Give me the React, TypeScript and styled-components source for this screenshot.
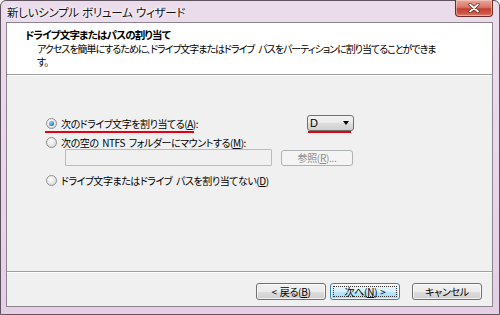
import React from "react";
import styled, { createGlobalStyle } from "styled-components";

const GlobalStyle = createGlobalStyle`
  html, body { margin: 0; padding: 0; width: 500px; height: 315px; overflow: hidden; background: #ffffff; }
  * { box-sizing: border-box; }
  #root { width: 500px; height: 315px; }
`;

const Window = styled.div`
  width: 500px;
  height: 315px;
  display: flex;
  flex-direction: column;
  background: linear-gradient(to bottom, #ebdcec 0%, #e8d6e8 60%, #e4cfe4 100%);
  border: 1px solid #5e5260;
  border-radius: 6px 6px 0 0;
  padding: 0 6px 7px 5px;
  font-family: "Noto Sans CJK JP", "Noto Sans", sans-serif;
  font-feature-settings: "palt";
  color: #000;
`;

const TitleBar = styled.div`
  height: 21px;
  display: flex;
  align-items: flex-start;
  justify-content: space-between;
`;

const TitleText = styled.span`
  font-size: 11.5px;
  line-height: 20px;
  letter-spacing: -0.3px;
  word-spacing: 1px;
  padding-left: 1px;
  padding-top: 1px;
  color: #111;
  text-shadow: 0 0 6px #fff, 0 0 3px #fff;
`;

const CloseButton = styled.div`
  width: 38px;
  height: 17px;
  margin-top: -1px;
  border: 1px solid #6e2a24;
  border-top: none;
  border-radius: 0 0 4px 4px;
  background: linear-gradient(to bottom, #e9a79b 0%, #d8776a 45%, #c2402f 55%, #d0584a 85%, #e08676 100%);
  box-shadow: inset 0 0 0 1px rgba(255, 220, 210, 0.5);
  display: flex;
  align-items: center;
  justify-content: center;
`;

const Client = styled.div`
  flex: 1;
  display: flex;
  flex-direction: column;
  border: 1px solid #8c8590;
  background: #f0f0f0;
`;

const Header = styled.div`
  height: 52px;
  background: #ffffff;
  padding: 5px 0 0 18px;
  border-bottom: 1px solid #a0a0a0;
  box-shadow: 0 1px 0 #ffffff;
`;

const HeaderTitle = styled.div`
  font-size: 10.5px;
  font-weight: 700;
  line-height: 14px;
  letter-spacing: -0.8px;
`;

const HeaderSub = styled.div`
  font-size: 10px;
  line-height: 13px;
  letter-spacing: -1px;
  word-spacing: 3px;
  padding-left: 12px;
  white-space: nowrap;
`;

const Body = styled.div`
  flex: 1;
  padding: 40px 0 0 39px;
  display: flex;
  flex-direction: column;
  border-bottom: 1px solid #a0a0a0;
`;

const Row = styled.div<{ $top?: number }>`
  display: flex;
  align-items: center;
  margin-top: ${(p) => p.$top ?? 0}px;
`;

const RadioLabel = styled.label<{ $width?: number; $marked?: boolean }>`
  position: relative;
  display: flex;
  align-items: center;
  gap: 4px;
  font-size: 10px;
  line-height: 13px;
  letter-spacing: -0.45px;
  word-spacing: 2px;
  white-space: nowrap;
  width: ${(p) => (p.$width ? `${p.$width}px` : "auto")};
  ${(p) =>
    p.$marked &&
    `&::after {
      content: "";
      position: absolute;
      left: -1px;
      top: 14px;
      width: 149px;
      height: 2px;
      background: #e60012;
    }`}
`;

const RadioCircle = styled.span<{ $checked?: boolean }>`
  width: 11px;
  height: 11px;
  border-radius: 50%;
  border: 1px solid #8e8f8f;
  background: radial-gradient(circle at 40% 35%, #ffffff 0%, #e6e6e6 55%, #cfcfcf 100%);
  display: flex;
  align-items: center;
  justify-content: center;
  flex: none;
  &::after {
    content: "";
    display: ${(p) => (p.$checked ? "block" : "none")};
    width: 5px;
    height: 5px;
    border-radius: 50%;
    background: radial-gradient(circle at 35% 35%, #9fd3f5 0%, #2f86c9 60%, #1c5a93 100%);
  }
`;

const Underlined = styled.span`
  text-decoration: underline;
`;

const Combo = styled.div`
  position: relative;
  width: 47px;
  height: 16px;
  border: 1px solid #707070;
  border-radius: 3px;
  background: linear-gradient(to bottom, #f2f2f2 0%, #ebebeb 50%, #dddddd 51%, #cfcfcf 100%);
  display: flex;
  align-items: center;
  justify-content: space-between;
  padding: 0 4px 0 2px;
  &::after {
    content: "";
    position: absolute;
    left: 0px;
    bottom: -3px;
    width: 43px;
    height: 2px;
    background: #e60012;
  }
`;

const ComboText = styled.span`
  font-family: "Liberation Sans", sans-serif;
  font-size: 11px;
  line-height: 12px;
`;

const Arrow = styled.span`
  width: 0;
  height: 0;
  border-left: 3.5px solid transparent;
  border-right: 3.5px solid transparent;
  border-top: 4px solid #000;
`;

const FieldRow = styled.div`
  display: flex;
  align-items: center;
  padding-left: 19px;
  gap: 9px;
`;

const TextField = styled.div`
  width: 207px;
  height: 17px;
  border: 1px solid #b7bcc0;
  border-radius: 1px;
  background: #f0f0f0;
`;

const BrowseButton = styled.div`
  width: 72px;
  height: 16px;
  border: 1px solid #adb2b5;
  border-radius: 3px;
  background: #f4f4f4;
  color: #8d8d8d;
  font-size: 10px;
  line-height: 14px;
  letter-spacing: -0.3px;
  text-align: center;
`;

const Footer = styled.div`
  height: 34px;
  border-top: 1px solid #ffffff;
  display: flex;
  align-items: flex-start;
  justify-content: flex-end;
  padding: 10px 10px 0 0;
`;

const ButtonGroup = styled.div`
  display: flex;
  gap: 4px;
  margin-right: 12px;
`;

const Button = styled.div<{ $primary?: boolean }>`
  position: relative;
  width: 70px;
  height: 17px;
  border: 1px solid ${(p) => (p.$primary ? "#3c7fb1" : "#707070")};
  border-radius: 3px;
  background: ${(p) =>
    p.$primary
      ? "linear-gradient(to bottom, #eaf6fd 0%, #d9f0fc 50%, #bee6fd 51%, #a7d9f5 100%)"
      : "linear-gradient(to bottom, #f2f2f2 0%, #ebebeb 50%, #dddddd 51%, #cfcfcf 100%)"};
  box-shadow: inset 0 0 0 1px rgba(255, 255, 255, 0.7);
  font-size: 10px;
  line-height: 15px;
  letter-spacing: -0.3px;
  word-spacing: 1px;
  text-align: center;
  ${(p) =>
    p.$primary &&
    `&::after {
      content: "";
      position: absolute;
      inset: 2px;
      border: 1px dotted #333;
    }`}
`;

export default function App() {
  return (
    <>
      <GlobalStyle />
      <Window>
        <TitleBar>
          <TitleText>新しいシンプル ボリューム ウィザード</TitleText>
          <CloseButton>
            <svg width="12" height="10" viewBox="0 0 12 10">
              <path d="M2 1.5 L10 8.5 M10 1.5 L2 8.5" stroke="#5a2a25" strokeWidth="3.2" strokeLinecap="round" />
              <path d="M2 1.5 L10 8.5 M10 1.5 L2 8.5" stroke="#ffffff" strokeWidth="1.8" strokeLinecap="round" />
            </svg>
          </CloseButton>
        </TitleBar>
        <Client>
          <Header>
            <HeaderTitle>ドライブ文字またはパスの割り当て</HeaderTitle>
            <HeaderSub>
              アクセスを簡単にするために、ドライブ文字またはドライブ パスをパーティションに割り当てることができま
              <br />
              す。
            </HeaderSub>
          </Header>
          <Body>
            <Row>
              <RadioLabel $width={261} $marked>
                <RadioCircle $checked />
                <span>
                  次のドライブ文字を割り当てる(<Underlined>A</Underlined>):
                </span>
              </RadioLabel>
              <Combo>
                <ComboText>D</ComboText>
                <Arrow />
              </Combo>
            </Row>
            <Row $top={5}>
              <RadioLabel>
                <RadioCircle />
                <span>
                  次の空の NTFS フォルダーにマウントする(<Underlined>M</Underlined>):
                </span>
              </RadioLabel>
            </Row>
            <FieldRow>
              <TextField />
              <BrowseButton>
                参照(<Underlined>R</Underlined>)...
              </BrowseButton>
            </FieldRow>
            <Row $top={8}>
              <RadioLabel>
                <RadioCircle />
                <span>
                  ドライブ文字またはドライブ パスを割り当てない(<Underlined>D</Underlined>)
                </span>
              </RadioLabel>
            </Row>
          </Body>
          <Footer>
            <ButtonGroup>
              <Button>&lt; 戻る(<Underlined>B</Underlined>)</Button>
              <Button $primary>
                次へ(<Underlined>N</Underlined>) &gt;
              </Button>
            </ButtonGroup>
            <Button>キャンセル</Button>
          </Footer>
        </Client>
      </Window>
    </>
  );
}
